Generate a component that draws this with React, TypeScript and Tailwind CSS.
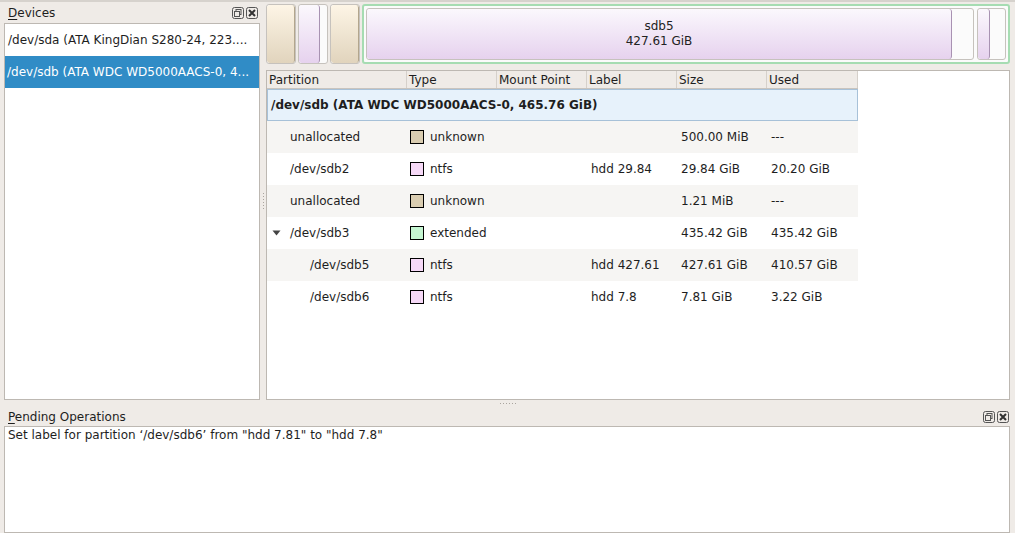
import React from 'react';

type Row = {
  name: string;
  depth: number;
  type: string;
  swatch: string;
  label: string;
  size: string;
  used: string;
  expand?: boolean;
};

const rows: Row[] = [
  { name: 'unallocated', depth: 1, type: 'unknown', swatch: 'bg-[#dacdb1]', label: '', size: '500.00 MiB', used: '---' },
  { name: '/dev/sdb2', depth: 1, type: 'ntfs', swatch: 'bg-[#f6d9f7]', label: 'hdd 29.84', size: '29.84 GiB', used: '20.20 GiB' },
  { name: 'unallocated', depth: 1, type: 'unknown', swatch: 'bg-[#dacdb1]', label: '', size: '1.21 MiB', used: '---' },
  { name: '/dev/sdb3', depth: 1, type: 'extended', swatch: 'bg-[#c5f6d2]', label: '', size: '435.42 GiB', used: '435.42 GiB', expand: true },
  { name: '/dev/sdb5', depth: 2, type: 'ntfs', swatch: 'bg-[#f6d9f7]', label: 'hdd 427.61', size: '427.61 GiB', used: '410.57 GiB' },
  { name: '/dev/sdb6', depth: 2, type: 'ntfs', swatch: 'bg-[#f6d9f7]', label: 'hdd 7.8', size: '7.81 GiB', used: '3.22 GiB' },
];

const DockButtons = () => (
  <div className="flex items-center gap-[2px]">
    <svg width="12" height="12" viewBox="0 0 12 12">
      <rect x="0.5" y="0.5" width="11" height="11" rx="2" fill="none" stroke="#555" />
      <rect x="4" y="2.5" width="5" height="5" fill="none" stroke="#555" />
      <rect x="2.5" y="4.5" width="5" height="5" fill="#efebe7" stroke="#555" />
    </svg>
    <svg width="12" height="12" viewBox="0 0 12 12">
      <rect x="0.5" y="0.5" width="11" height="11" rx="2" fill="none" stroke="#555" />
      <path d="M3 3 L9 9 M9 3 L3 9" stroke="#333" strokeWidth="2" />
    </svg>
  </div>
);

const DockTitle = ({ first, rest }: { first: string; rest: string }) => (
  <span>
    <span className="underline underline-offset-2">{first}</span>
    {rest}
  </span>
);

const Seg = ({ w, used, kind }: { w: string; used: string; kind: 'tan' | 'ntfs' }) => {
  const fill =
    kind === 'tan'
      ? 'bg-gradient-to-b from-[#fdf5e6] to-[#e1d4bd]'
      : 'bg-gradient-to-b from-[#fbf8fd] to-[#e6d2ee]';
  const edge = kind === 'tan' ? 'border-[#b3a68d]' : 'border-[#a892b2]';
  return (
    <div className={`${w} h-full flex rounded-[3px] border border-[#c6c2bd] bg-[#fbfbfb] overflow-hidden`}>
      <div className={`${used} h-full ${fill} border-r ${edge} rounded-[3px]`} />
    </div>
  );
};

export default function App() {
  return (
    <div
      className="w-[1015px] h-[533px] overflow-hidden bg-[#efebe7] border-t-2 border-[#d6d2cd] flex flex-col text-[12px] text-[#1e1e1e]"
      style={{ fontFamily: '"DejaVu Sans", "Liberation Sans", sans-serif' }}
    >
      {/* top area */}
      <div className="flex h-[398px]">
        {/* devices dock */}
        <div className="w-[260px] pl-[4px] flex flex-col">
          <div className="h-[21px] flex items-center justify-between pl-[4px] pr-[2px]">
            <DockTitle first="D" rest="evices" />
            <DockButtons />
          </div>
          <div className="flex-1 bg-white border border-[#bdb8b2]">
            <div className="h-[32px] flex items-center px-[3px] whitespace-nowrap overflow-hidden">
              /dev/sda (ATA KingDian S280-24, 223....
            </div>
            <div className="h-[32px] flex items-center px-[2px] bg-[#308cc6] text-white whitespace-nowrap overflow-hidden">
              /dev/sdb (ATA WDC WD5000AACS-0, 4...
            </div>
          </div>
        </div>

        {/* vertical splitter */}
        <div className="w-[6px] flex items-center justify-center">
          <div className="flex flex-col gap-[2px]">
            {[0, 1, 2, 3, 4, 5].map((i) => (
              <div key={i} className="w-[1px] h-[1px] bg-[#a9a49e]" />
            ))}
          </div>
        </div>

        {/* right side */}
        <div className="flex-1 pr-[5px] flex flex-col">
          {/* partition graph */}
          <div className="h-[60px] mt-[2px] flex gap-[2px]">
            <Seg w="w-[30px]" used="w-full" kind="tan" />
            <Seg w="w-[30px]" used="w-[21px]" kind="ntfs" />
            <Seg w="w-[30px]" used="w-full" kind="tan" />
            <div className="flex-1 h-full rounded-[3px] border-2 border-[#a6dcb2] bg-[#fbfbfb] flex gap-[3px] p-[2px]">
              <div className="flex-1 h-full flex rounded-[3px] border border-[#c6c2bd] overflow-hidden">
                <div className="w-[585px] h-full bg-gradient-to-b from-[#fbf8fd] to-[#e6d2ee] border-r border-[#a892b2] rounded-[3px] flex flex-col items-center justify-center text-[12px] leading-[15px] text-[#222]">
                  <div>sdb5</div>
                  <div>427.61 GiB</div>
                </div>
              </div>
              <Seg w="w-[29px]" used="w-[12px]" kind="ntfs" />
            </div>
          </div>

          {/* table */}
          <div className="flex-1 mt-[6px] bg-white border border-[#bdb8b2] overflow-hidden">
            <div className="w-[591px]">
              <div className="h-[18px] flex bg-[#efebe7] border-b border-[#c9c4be]">
                {[
                  ['Partition', 'w-[140px]'],
                  ['Type', 'w-[90px]'],
                  ['Mount Point', 'w-[90px]'],
                  ['Label', 'w-[90px]'],
                  ['Size', 'w-[90px]'],
                  ['Used', 'w-[91px]'],
                ].map(([t, w]) => (
                  <div key={t} className={`${w} h-full flex items-center pl-[2px] border-r border-[#d5d0ca] leading-none`}>
                    {t}
                  </div>
                ))}
              </div>
              <div className="h-[32px] flex items-center pl-[3px] bg-[#e7f2fb] border border-[#a7c1d8] font-bold whitespace-nowrap">
                /dev/sdb (ATA WDC WD5000AACS-0, 465.76 GiB)
              </div>
              {rows.map((r, i) => (
                <div
                  key={i}
                  className={`h-[32px] flex items-center whitespace-nowrap ${i % 2 === 0 ? 'bg-[#f6f5f3]' : 'bg-white'}`}
                >
                  <div className="w-[140px] flex items-center">
                    <div className="w-[23px] flex justify-start pl-[5px]">
                      {r.expand && (
                        <svg width="9" height="6" viewBox="0 0 9 6">
                          <path d="M0.5 0.5 H8.5 L4.5 5.5 Z" fill="#444" />
                        </svg>
                      )}
                    </div>
                    <span className={r.depth === 2 ? 'pl-[20px]' : ''}>{r.name}</span>
                  </div>
                  <div className="w-[90px] flex items-center pl-[3px]">
                    <div className={`w-[14px] h-[14px] border border-black ${r.swatch} mr-[6px]`} />
                    {r.type}
                  </div>
                  <div className="w-[90px]" />
                  <div className="w-[90px] pl-[4px]">{r.label}</div>
                  <div className="w-[90px] pl-[4px]">{r.size}</div>
                  <div className="w-[91px] pl-[4px]">{r.used}</div>
                </div>
              ))}
            </div>
          </div>
        </div>
      </div>

      {/* horizontal splitter */}
      <div className="h-[7px] flex items-center justify-center">
        <div className="flex gap-[2px]">
          {[0, 1, 2, 3, 4, 5].map((i) => (
            <div key={i} className="w-[1px] h-[1px] bg-[#a9a49e]" />
          ))}
        </div>
      </div>

      {/* pending operations dock */}
      <div className="flex-1 pl-[4px] pr-[5px] flex flex-col">
        <div className="h-[19px] flex items-center justify-between pl-[4px] pr-[1px]">
          <DockTitle first="P" rest="ending Operations" />
          <DockButtons />
        </div>
        <div className="flex-1 bg-white border border-[#bdb8b2] px-[3px] pt-[1px] leading-[15px]">
          Set label for partition ‘/dev/sdb6’ from "hdd 7.81" to "hdd 7.8"
        </div>
      </div>
    </div>
  );
}
